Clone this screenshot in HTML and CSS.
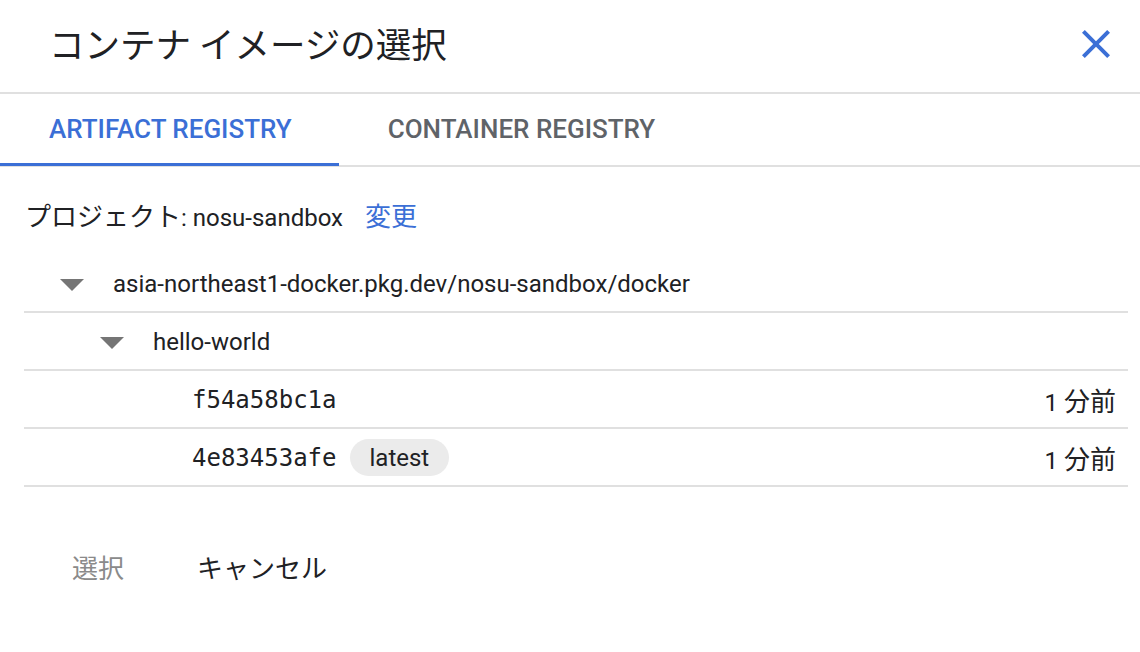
FILE: index.html
```html
<!DOCTYPE html>
<html lang="ja">
<head>
<meta charset="utf-8">
<link rel="stylesheet" href="styles.css">
</head>
<body>
<div class="dialog">
  <header class="header">
    <h1 class="title">コンテナ イメージの選択</h1>
    <button class="close" aria-label="閉じる">
      <svg viewBox="0 0 24 24" width="48" height="48"><path d="M19 6.41L17.59 5 12 10.59 6.41 5 5 6.41 10.59 12 5 17.59 6.41 19 12 13.41 17.59 19 19 17.59 13.41 12z" fill="currentColor"/></svg>
    </button>
  </header>
  <nav class="tabs">
    <div class="tab active">ARTIFACT REGISTRY</div>
    <div class="tab">CONTAINER REGISTRY</div>
  </nav>
  <section class="content">
    <div class="project">
      <span class="project-label"><span class="jp">プロジェクト</span>: nosu-sandbox</span>
      <a class="change">変更</a>
    </div>
    <div class="tree">
      <div class="row lvl0">
        <svg class="caret" viewBox="0 0 24 12" width="24" height="12"><polygon points="0,0 24,0 12,12" fill="currentColor"/></svg>
        <span class="name">asia-northeast1-docker.pkg.dev/nosu-sandbox/docker</span>
      </div>
      <div class="row lvl1">
        <svg class="caret" viewBox="0 0 24 12" width="24" height="12"><polygon points="0,0 24,0 12,12" fill="currentColor"/></svg>
        <span class="name">hello-world</span>
      </div>
      <div class="row lvl2">
        <span class="spacer"></span>
        <span class="hash">f54a58bc1a</span>
        <span class="time">1 <span class="jp">分前</span></span>
      </div>
      <div class="row lvl2">
        <span class="spacer"></span>
        <span class="hash">4e83453afe</span>
        <span class="chip">latest</span>
        <span class="time">1 <span class="jp">分前</span></span>
      </div>
    </div>
  </section>
  <footer class="actions">
    <button class="btn disabled">選択</button>
    <button class="btn">キャンセル</button>
  </footer>
</div>
</body>
</html>
```

FILE: styles.css
```css
* { box-sizing: border-box; }
html, body { margin: 0; padding: 0; background: #fff; }
body {
  font-family: Roboto, "Noto Sans CJK JP", sans-serif;
  color: #202124;
  width: 1140px;
  height: 652px;
  overflow: hidden;
}
.header {
  height: 94px;
  display: flex;
  align-items: center;
  justify-content: space-between;
  padding: 0 20px 0 49px;
  border-bottom: 2px solid #e0e0e0;
}
.title {
  margin: 0;
  font-family: "Noto Sans CJK JP", sans-serif;
  font-weight: 400;
  font-size: 35.5px;
  color: #202124;
  padding-bottom: 8px;
}
.close {
  border: 0;
  background: none;
  padding: 0;
  width: 48px;
  height: 48px;
  color: #3b6fd6;
  margin-bottom: 4px;
}
.close svg { display: block; }
.tabs {
  display: flex;
  height: 73px;
  border-bottom: 2px solid #e0e0e0;
}
.tab {
  padding: 0 47px 2px 49px;
  display: flex;
  align-items: center;
  font-size: 26px;
  font-weight: 500;
  color: #5f6368;
  height: 72px;
}
.tab.active {
  color: #3b6fd6;
  border-bottom: 3px solid #3b6fd6;
  padding-top: 3px;
}
.content {
  padding: 28px 12px 0 24px;
}
.project {
  display: flex;
  align-items: center;
  height: 38px;
  font-size: 24px;
  gap: 22px;
  padding-left: 1px;
}
.jp { font-family: "Noto Sans CJK JP", sans-serif; font-size: 26px; }
.project-label { color: #202124; }
.change { color: #3b6fd6; font-size: 26px; font-family: "Noto Sans CJK JP", sans-serif; }
.tree { margin-top: 22px; }
.row {
  display: flex;
  align-items: center;
  height: 58px;
  border-bottom: 2px solid #e0e0e0;
  font-size: 24px;
  padding-right: 12px;
  padding-top: 1px;
}
.lvl0 { padding-left: 36px; }
.lvl1 { padding-left: 76px; }
.lvl2 { padding-left: 116px; }
.caret { color: #757575; flex: none; margin-right: 29px; margin-top: 2px; }
.spacer { width: 52px; flex: none; }
.hash {
  font-family: "DejaVu Sans Mono", "Liberation Mono", monospace;
  font-size: 24px;
  color: #202124;
}
.chip {
  margin-left: 13px;
  height: 37px;
  padding: 0 20px;
  border-radius: 19px;
  background: #ebebeb;
  display: flex;
  align-items: center;
  font-size: 24px;
}
.time { margin-left: auto; }
.actions {
  display: flex;
  gap: 25px;
  padding-left: 48px;
  margin-top: 55px;
}
.btn {
  font-family: "Noto Sans CJK JP", sans-serif;
  font-size: 26px;
  height: 48px;
  padding: 0 24px;
  border: 0;
  background: none;
  color: #202124;
}
.btn.disabled { color: #8a8a8a; }
```
